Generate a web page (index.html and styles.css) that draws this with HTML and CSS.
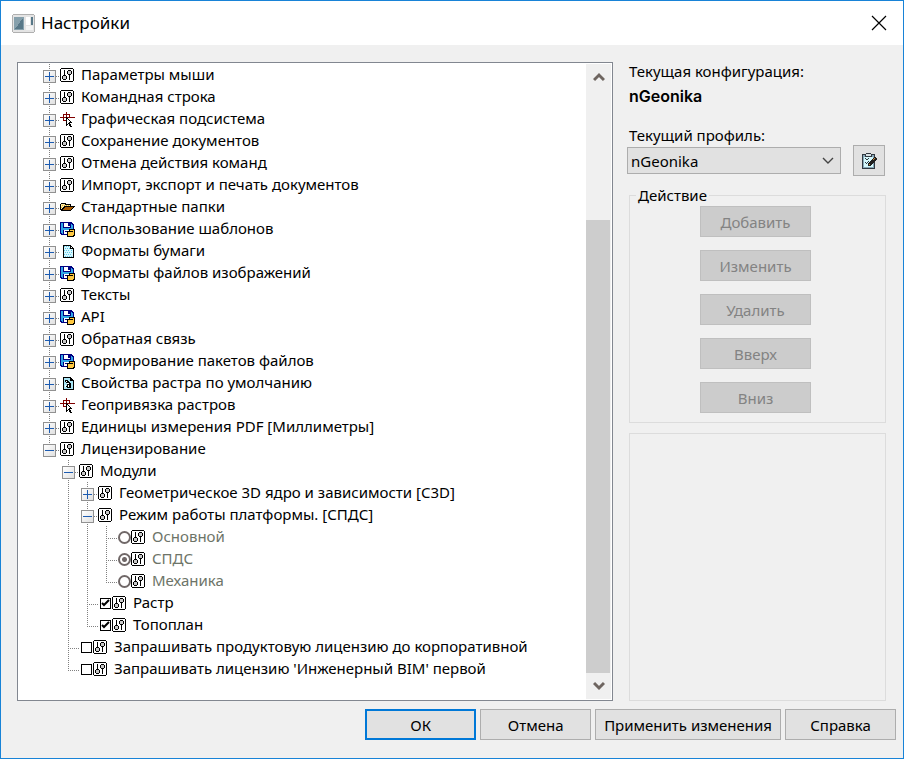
FILE: index.html
```
<!DOCTYPE html>
<html lang="ru">
<head>
    <meta charset="UTF-8">
    <title>Настройки</title>
    <link rel="stylesheet" href="styles.css">
</head>
<body>
<svg class="sprite" shape-rendering="crispEdges">
    <symbol id="i-sliders" viewBox="0 0 14 14">
        <path d="M1 0h12v1h1v12h-1v1h-12v-1h-1v-12h1z" fill="#000"/>
        <rect x="1" y="1" width="12" height="12" fill="#fff"/>
        <path d="M4 2h1v5h-1zM9 7h1v5h-1zM3 7h3v1h-3zM3 11h3v1h-3zM2 8h1v3h-1zM6 8h1v3h-1zM8 2h3v1h-3zM8 6h3v1h-3zM7 3h1v3h-1zM11 3h1v3h-1z" fill="#000"/>
        <path d="M3 8h3v3h-3zM8 3h3v3h-3z" fill="#c8c8c8"/>
    </symbol>
    <symbol id="i-cross" viewBox="0 0 15 15">
        <path d="M0 5h15v1h-15zM6 0h1v12h-1zM3 2h7v1h-7zM3 8h4v1h-4zM3 2h1v7h-1zM9 2h1v4h-1z" fill="#800000"/>
        <path d="M6 5h1v1h1v1h1v1h1v1h1v1h1v1h-2v1h1v2h1v1h-2v-1h-1v-2h-1v1h-1v1h-1z" fill="#000"/>
        <path d="M7 7h1v1h1v1h1v1h-1v1h-1v1h-1z" fill="#fff"/>
    </symbol>
    <symbol id="i-folder" viewBox="0 0 15 15">
        <path d="M1 3h5v1h5v2h4v1h-1v1h-1v1h-1v1h-1v1h-10v-1h-1v-6h1z" fill="#000"/>
        <path d="M1 4h4v1h5v1h-6v1h-1v1h-1v1h-1z" fill="#ffe9a0"/>
        <path d="M2 5h1v1h-1zM4 5h1v1h-1zM1 7h1v1h-1zM6 5h1v1h-1zM8 5h1v1h-1z" fill="#e0b840"/>
        <path d="M5 7h8v1h-1v1h-1v1h-8v-1h1v-1h1z" fill="#a85a00"/>
    </symbol>
    <symbol id="i-disk" viewBox="0 0 15 15">
        <path d="M0 0h12v1h1v1h1v11h-13v-1h-1z" fill="#000080"/>
        <path d="M1 1h2v5h8v-4h1v1h1v9h-1v-4h-9v4h-1v-1h-1z" fill="#30a8e8"/>
        <path d="M4 1h6v4h-6zM4 8h7v4h-7z" fill="#fff"/>
        <path d="M8 1h2v3h-2zM5 9h5v1h-5z" fill="#000080"/>
        <path d="M9 7h6v7h-1v1h-7v-6h2z" fill="#000"/>
        <path d="M8 10h5v4h-5zM10 8h4v5h-1v-4h-3z" fill="#ffc840"/>
    </symbol>
    <symbol id="i-page" viewBox="0 0 15 15">
        <path d="M3 1h8v1h1v1h1v1h1v10h-11z" fill="#000"/>
        <path d="M4 2h6v3h3v8h-9z" fill="#d8f8ff"/>
        <path d="M11 3h1v1h-1z" fill="#fff"/>
        <path d="M4 2h1v1h-1zM6 2h1v1h-1zM8 2h1v1h-1zM5 4h1v1h-1zM7 4h1v1h-1zM9 4h1v1h-1zM11 6h1v1h-1zM4 6h1v1h-1zM6 6h1v1h-1zM8 6h1v1h-1zM5 8h1v1h-1zM7 8h1v1h-1zM9 8h1v1h-1zM11 8h1v1h-1zM4 10h1v1h-1zM6 10h1v1h-1zM8 10h1v1h-1zM10 10h1v1h-1zM5 12h1v1h-1zM7 12h1v1h-1zM9 12h1v1h-1zM11 12h1v1h-1z" fill="#60c8e8"/>
    </symbol>
    <symbol id="i-raster" viewBox="0 0 15 15">
        <path d="M3 1h8v1h1v1h1v1h1v10h-11z" fill="#000"/>
        <path d="M4 2h6v3h3v8h-9z" fill="#a8e4f4"/>
        <path d="M5 4h3v1h1v1h1v1h1v5h-4v-1h-1v-1h1v-3h-1v-1h-1z" fill="#000"/>
        <path d="M6 5h1v1h-1zM7 7h2v1h-2zM8 9h1v2h-1zM5 9h1v2h-1z" fill="#fff"/>
    </symbol>
</svg>

<div class="window">
    <header class="titlebar">
        <svg class="app-icon" viewBox="0 0 23 19" shape-rendering="crispEdges">
            <path d="M1 0h21v1h1v17h-1v1h-21v-1h-1v-17h1z" fill="#b0b0b0"/>
            <rect x="1" y="1" width="21" height="17" fill="#e4e4e4"/>
            <rect x="2" y="3" width="10" height="13" fill="#86a0ac"/>
            <path d="M3 15L11 4v11z" fill="#587888"/>
            <rect x="14" y="3" width="4" height="8" fill="#fff"/>
            <rect x="19" y="3" width="2" height="8" fill="#587888"/>
            <rect x="14" y="12" width="7" height="4" fill="#f4f4f4"/>
        </svg>
        <h1>Настройки</h1>
        <button class="close" aria-label="Закрыть"><svg viewBox="0 0 16 16"><path d="M1 1L15 15M15 1L1 15" stroke="#000" stroke-width="1.2"/></svg></button>
    </header>

    <main class="content">
        <section class="tree-box">
            <ul class="tree" id="tree"></ul>
            <div class="scrollbar">
                <button aria-label="Вверх по списку"><svg viewBox="0 0 12 10"><path d="M1 8L6 3L11 8" fill="none" stroke="#6e6560" stroke-width="3"/></svg></button>
                <div class="track"></div>
                <div class="thumb"></div>
                <button aria-label="Вниз по списку"><svg viewBox="0 0 12 10"><path d="M1 2L6 7L11 2" fill="none" stroke="#6e6560" stroke-width="3"/></svg></button>
            </div>
        </section>

        <aside class="side">
            <p class="caption">Текущая конфигурация:</p>
            <p class="config-name">nGeonika</p>
            <label class="caption" for="profile">Текущий профиль:</label>
            <div class="profile-row">
                <div class="select-wrap">
                    <select id="profile"><option>nGeonika</option></select>
                    <svg viewBox="0 0 12 8"><path d="M1 1L6 6L11 1" fill="none" stroke="#444" stroke-width="1.4"/></svg>
                </div>
                <button class="edit" aria-label="Редактировать профиль">
                    <svg viewBox="0 0 16 16" shape-rendering="crispEdges">
                        <path d="M1 1h4v-1h5v1h4v15h-13z" fill="#303840"/>
                        <path d="M2 2h2v2h7v-2h2v13h-11z" fill="#88a8b8"/>
                        <path d="M3 4h9v10h-9z" fill="#d4f8fc"/>
                        <path d="M5 1h5v2h-5z" fill="#d8e0e4"/>
                        <path d="M4 5h1v1h1v1h-1v-1h-1zM7 5h1v1h-1zM6 6h1v1h-1zM4 9h1v1h1v1h-1v-1h-1zM7 8h1v1h-1zM6 9h1v1h-1z" fill="#303840"/>
                        <path d="M13 4h2v1h1v2h-1v1h-1v1h-1v1h-1v1h-1v1h-1v1h-3v-3h1v-1h1v-1h1v-1h1v-1h1v-1h1z" fill="#202020"/>
                        <path d="M13 5h1v1h-1zM12 6h1v1h-1zM8 11h1v1h-1z" fill="#d08838"/>
                    </svg>
                </button>
            </div>
            <fieldset class="actions">
                <legend>Действие</legend>
                <button disabled>Добавить</button>
                <button disabled>Изменить</button>
                <button disabled>Удалить</button>
                <button disabled>Вверх</button>
                <button disabled>Вниз</button>
            </fieldset>
            <div class="preview"></div>
        </aside>
    </main>

    <footer class="footer">
        <button class="default">ОК</button>
        <button>Отмена</button>
        <button>Применить изменения</button>
        <button>Справка</button>
    </footer>
</div>
<script src="tree.js"></script>
</body>
</html>
```
FILE: styles.css
```
* {
    box-sizing: border-box;
}
body {
    margin: 0;
    font: 15px/22px "Noto Sans", Tahoma, sans-serif;
    color: #000;
}
h1, p, ul {
    margin: 0;
    padding: 0;
}
button, select {
    font: inherit;
    color: inherit;
    border-radius: 0;
}
svg {
    display: block;
}
.sprite {
    display: none;
}
.window {
    display: flex;
    flex-direction: column;
    min-height: 100vh;
    background: #f0f0f0;
    border: 1px solid #1883d7;
}

/* title bar */
.titlebar {
    display: flex;
    align-items: center;
    height: 44px;
    padding: 0 16px 0 11px;
    background: #fff;
}
.app-icon {
    width: 23px;
    height: 19px;
    margin-right: 6px;
}
.titlebar h1 {
    flex: 1;
    font-size: 17px;
    font-weight: normal;
}
.close {
    padding: 0;
    border: none;
    background: none;
}
.close svg {
    width: 16px;
    height: 16px;
}

.content {
    flex: 1;
    display: grid;
    grid-template-columns: 1fr 259px;
    gap: 14px;
    padding: 17px 17px 0 16px;
}

/* tree */
.tree-box {
    display: flex;
    padding: 1px;
    background: #fff;
    border: 1px solid #828790;
}
.tree {
    flex: 1;
    padding-left: 24px;
    list-style: none;
    white-space: nowrap;
}
.tree ul {
    margin-left: 19px;
    list-style: none;
}
.tree li {
    position: relative;
}
.tree li::before {
    content: "";
    position: absolute;
    left: 6px;
    top: 0;
    bottom: 0;
    width: 1px;
    background: repeating-linear-gradient(#808080 0 1px, transparent 1px 2px);
}
.tree li:last-child::before {
    bottom: auto;
    height: 12px;
}
.row {
    display: flex;
    align-items: center;
    height: 22px;
}
.toggle {
    position: relative;
    width: 13px;
    height: 13px;
    margin-top: 2px;
    padding: 0;
    border: 1px solid #919191;
    background: linear-gradient(135deg, #fff, #e0e0e0);
}
.toggle::before, .toggle.plus::after {
    content: "";
    position: absolute;
    left: 1px;
    top: 5px;
    width: 9px;
    height: 1px;
    background: #1c5bb0;
}
.toggle.plus::after {
    left: 5px;
    top: 1px;
    width: 1px;
    height: 9px;
}
.dots {
    width: 4px;
    height: 1px;
    margin-top: 2px;
    background: repeating-linear-gradient(90deg, #808080 0 1px, transparent 1px 2px);
}
.leaf .dots {
    width: 12px;
    margin-left: 6px;
}
.icon {
    flex: none;
    width: 15px;
    height: 15px;
}
.icon.sliders {
    width: 14px;
    height: 14px;
}
.row .text {
    margin-left: 6px;
    padding-bottom: 2px;
}
.row .icon.sliders + .text {
    margin-left: 7px;
}
.row label {
    display: flex;
    align-items: center;
}
.row input {
    appearance: none;
    width: 11px;
    height: 11px;
    margin: 0 1px;
    border: 1px solid #000;
    background: #fff;
}
.check {
    display: flex;
    position: relative;
}
.check svg {
    position: absolute;
    left: 2px;
    top: 1px;
    width: 9px;
    height: 9px;
    pointer-events: none;
}
.row input[type="radio"] {
    width: 13px;
    height: 13px;
    margin: 0;
    border: 2px solid #706868;
    border-radius: 50%;
}
.row input[type="radio"]:checked {
    background: radial-gradient(circle, #706868 0 2px, #fff 3px);
}
.row.off {
    color: #6d7468;
}

/* scrollbar */
.scrollbar {
    display: flex;
    flex-direction: column;
    width: 25px;
    background: #f0f0f0;
}
.scrollbar button {
    display: flex;
    align-items: center;
    justify-content: center;
    height: 26px;
    padding: 0;
    border: none;
    background: none;
}
.scrollbar svg {
    width: 12px;
    height: 10px;
}
.track {
    flex: 29;
}
.thumb {
    flex: 101;
    margin-right: 1px;
    background: #cdcdcd;
}

/* right column */
.side {
    display: flex;
    flex-direction: column;
}
.caption {
    padding-left: 2px;
    line-height: 19px;
}
.config-name {
    margin: 6px 0 20px;
    padding-left: 2px;
    font: 600 16px/19px Inter, Arial, sans-serif;
}
.profile-row {
    display: flex;
    align-items: center;
    justify-content: space-between;
    height: 31px;
    margin-bottom: 8px;
    padding-right: 1px;
}
.select-wrap {
    position: relative;
    width: 214px;
}
.select-wrap select {
    appearance: none;
    display: block;
    width: 100%;
    height: 27px;
    padding: 0 3px;
    border: 1px solid #adadad;
    background: #e1e1e1;
}
.select-wrap svg {
    position: absolute;
    right: 7px;
    top: 10px;
    width: 12px;
    height: 8px;
    pointer-events: none;
}
.edit {
    display: flex;
    align-items: center;
    justify-content: center;
    width: 32px;
    height: 31px;
    padding: 0;
    border: 1px solid #adadad;
    background: #e1e1e1;
}
.edit svg {
    width: 16px;
    height: 16px;
}
.actions {
    display: flex;
    flex-direction: column;
    align-items: center;
    gap: 13px;
    margin: 0 0 10px 2px;
    padding: 0 4px 9px 0;
    border: 1px solid #dcdcdc;
}
.actions legend {
    margin-left: 6px;
    padding: 0 2px;
}
.actions button, .footer button {
    min-width: 111px;
    height: 31px;
    padding: 0 8px;
    border: 1px solid #adadad;
    background: #e1e1e1;
}
.actions button {
    border-color: #bfbfbf;
    background: #ccc;
    color: #838383;
}
.preview {
    flex: 1;
    margin-left: 2px;
    border: 1px solid #dcdcdc;
}

/* bottom buttons */
.footer {
    display: flex;
    justify-content: flex-end;
    gap: 4px;
    padding: 8px 7px 18px;
}
.footer .default {
    border: 2px solid #0078d7;
}
```
FILE: tree.js
```
var items = [
    { text: "Параметры мыши" },
    { text: "Командная строка" },
    { text: "Графическая подсистема", icon: "cross" },
    { text: "Сохранение документов" },
    { text: "Отмена действия команд" },
    { text: "Импорт, экспорт и печать документов" },
    { text: "Стандартные папки", icon: "folder" },
    { text: "Использование шаблонов", icon: "disk" },
    { text: "Форматы бумаги", icon: "page" },
    { text: "Форматы файлов изображений", icon: "disk" },
    { text: "Тексты" },
    { text: "API", icon: "disk" },
    { text: "Обратная связь" },
    { text: "Формирование пакетов файлов", icon: "disk" },
    { text: "Свойства растра по умолчанию", icon: "raster" },
    { text: "Геопривязка растров", icon: "cross" },
    { text: "Единицы измерения PDF [Миллиметры]" },
    { text: "Лицензирование", children: [
        { text: "Модули", children: [
            { text: "Геометрическое 3D ядро и зависимости [C3D]" },
            { text: "Режим работы платформы. [СПДС]", children: [
                { text: "Основной", type: "radio" },
                { text: "СПДС", type: "radio", checked: true },
                { text: "Механика", type: "radio" }
            ] },
            { text: "Растр", type: "checkbox", checked: true },
            { text: "Топоплан", type: "checkbox", checked: true }
        ] },
        { text: "Запрашивать продуктовую лицензию до корпоративной", type: "checkbox" },
        { text: "Запрашивать лицензию 'Инженерный BIM' первой", type: "checkbox" }
    ] }
];

function itemBody(item) {
    var icon = item.icon || "sliders";
    return '<svg class="icon ' + icon + '"><use href="#i-' + icon + '"/></svg>' +
        '<span class="text">' + item.text + '</span>';
}

function itemRow(item) {
    var checked = item.checked ? " checked" : "";
    if (item.type === "radio") {
        return '<div class="row leaf off"><span class="dots"></span><label>' +
            '<input type="radio" name="mode" disabled' + checked + '>' + itemBody(item) + '</label></div>';
    }
    if (item.type === "checkbox") {
        var tick = item.checked ? '<svg viewBox="0 0 9 9"><path d="M1 4L3 6L8 1" fill="none" stroke="#000" stroke-width="2"/></svg>' : '';
        return '<div class="row leaf"><span class="dots"></span><label><span class="check">' +
            '<input type="checkbox"' + checked + '>' + tick + '</span>' + itemBody(item) + '</label></div>';
    }
    var sign = item.children ? "minus" : "plus";
    return '<div class="row"><button class="toggle ' + sign + '" aria-label="' + item.text + '"></button>' +
        '<span class="dots"></span>' + itemBody(item) + '</div>';
}

function fillTree(list, items) {
    for (var i = 0; i < items.length; i++) {
        var li = document.createElement("li");
        li.innerHTML = itemRow(items[i]);
        if (items[i].children) {
            var ul = document.createElement("ul");
            fillTree(ul, items[i].children);
            li.appendChild(ul);
        }
        list.appendChild(li);
    }
}

fillTree(document.getElementById("tree"), items);
```
